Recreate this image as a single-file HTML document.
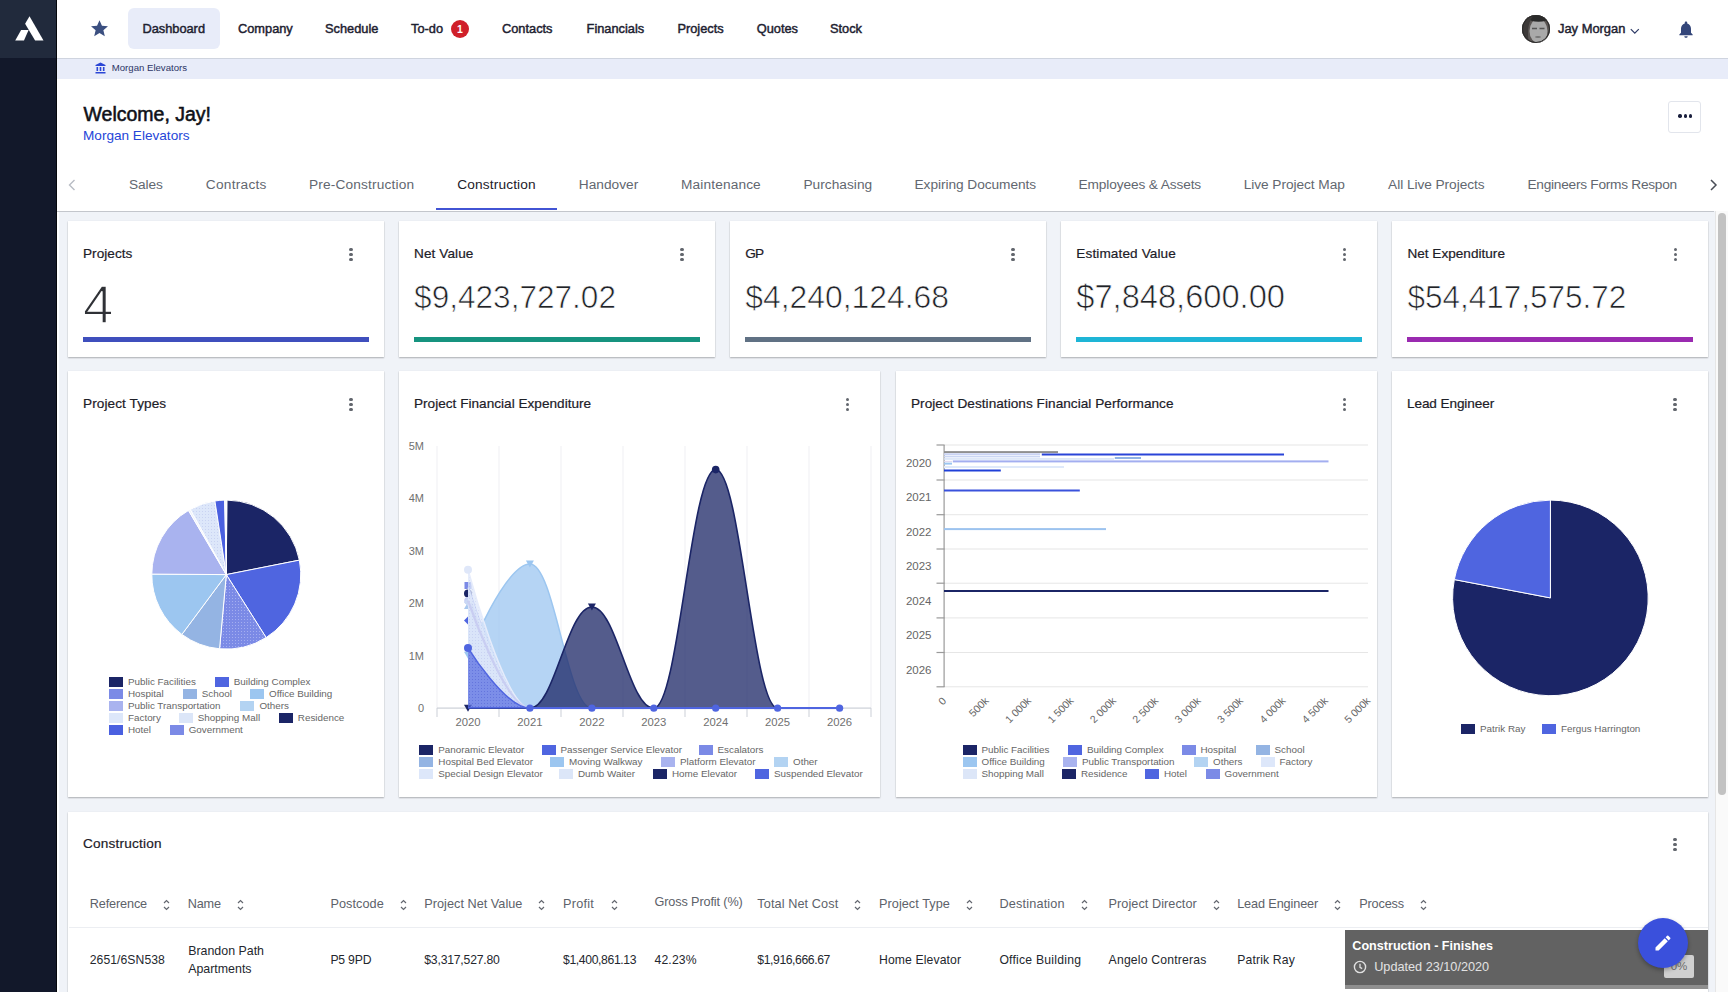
<!DOCTYPE html><html><head><meta charset="utf-8"><style>
*{box-sizing:border-box}
html,body{margin:0;padding:0}
body{width:1728px;height:992px;overflow:hidden;position:relative;background:#f0f3f8;font-family:"Liberation Sans", sans-serif;color:#1c1f2a}
.abs{position:absolute;white-space:nowrap}
.nav{position:absolute;top:21px;font-size:12.8px;font-weight:400;color:#1d2130;line-height:16px;-webkit-text-stroke:0.45px #1d2130}
.tab{position:absolute;top:176px;font-size:13.7px;color:#626770;line-height:18px}
.card{position:absolute;background:#fff;box-shadow:0 1px 1.5px rgba(0,0,0,.28),0 0 1px rgba(0,0,0,.08)}
.ctitle{position:absolute;font-size:13.6px;color:#1d2028;line-height:16px;-webkit-text-stroke:0.2px #1d2028}
.big{position:absolute;font-size:31.8px;color:#202227;line-height:36px;-webkit-text-stroke:0.7px #fff}
.bar{position:absolute;height:5px}
.keb{position:absolute;width:4px;height:14px}
.keb i{position:absolute;left:0.3px;width:3.4px;height:3.4px;border-radius:50%;background:#62666d}
.th{position:absolute;top:897px;font-size:12.7px;color:#5d626a;line-height:15px}
.td{position:absolute;font-size:12.2px;color:#24272e;line-height:15px}
.leg{position:absolute;font-size:9.85px;color:#666;line-height:12px;white-space:nowrap}
.lb{position:absolute;width:14px;height:10px}
</style></head><body>

<div class="abs" style="left:0;top:0;width:56px;height:992px;background:#12182a"></div>
<div class="abs" style="left:0;top:0;width:56px;height:57.5px;background:#212a3c"></div>
<div class="abs" style="left:57px;top:211px;width:2px;height:781px;background:#fff"></div>
<div class="abs" style="left:56px;top:0;width:1px;height:992px;background:#05070c"></div>
<svg class="abs" style="left:0;top:0" width="56" height="57" viewBox="0 0 56 57"><path d="M29.5 16.3 L43.5 40.6 L35.1 40.6 L25.1 23.8 Z" fill="#fff"/><path d="M21.1 29.9 L28.6 29.9 L24 40.6 L15.2 40.6 Z" fill="#fff"/></svg>
<div class="abs" style="left:57px;top:0;width:1671px;height:59px;background:#fff;border-bottom:1px solid #cfd4df"></div>
<svg class="abs" style="left:90px;top:19px" width="19" height="19" viewBox="0 0 24 24"><path d="M12 1.5l3.1 7.1 7.6.6-5.8 5 1.8 7.5L12 17.7l-6.7 4 1.8-7.5-5.8-5 7.6-.6z" fill="#3b4f80"/></svg>
<div class="abs" style="left:128px;top:8px;width:92px;height:41px;background:#e8ecf9;border-radius:6px"></div>
<div class="nav" style="left:142.4px">Dashboard</div>
<div class="nav" style="left:238px">Company</div>
<div class="nav" style="left:325px">Schedule</div>
<div class="nav" style="left:411px">To-do</div>
<div class="nav" style="left:502px">Contacts</div>
<div class="nav" style="left:586.6px">Financials</div>
<div class="nav" style="left:677.4px">Projects</div>
<div class="nav" style="left:756.7px">Quotes</div>
<div class="nav" style="left:830px">Stock</div>
<div class="abs" style="left:451px;top:20px;width:18px;height:18px;border-radius:9px;background:#d0202a;color:#fff;font-size:10.5px;font-weight:700;text-align:center;line-height:18px">1</div>
<svg class="abs" style="left:1522px;top:14.5px" width="28" height="28" viewBox="0 0 28 28"><defs><clipPath id="avc"><circle cx="14" cy="14" r="14"/></clipPath></defs><g clip-path="url(#avc)"><rect width="28" height="28" fill="#4a4848"/><path d="M0 0 H28 V28 H0Z" fill="#5a5553"/><ellipse cx="16.5" cy="16" rx="9" ry="12" fill="#a9a9a9"/><ellipse cx="16.5" cy="3.5" rx="10" ry="3.2" fill="#2a2a2a"/><path d="M10 13.5 h5 M17.5 13.5 h5" stroke="#555" stroke-width="1.4"/><ellipse cx="16" cy="22" rx="3" ry="1" fill="#777"/><path d="M0 0 V28 H7 C5 20 6 10 9 4 L12 0Z" fill="#3c3938"/></g><circle cx="14" cy="14" r="13.5" fill="none" stroke="#2a2a2a" stroke-width="1"/></svg>
<div class="nav" style="left:1558px;font-size:12.9px">Jay Morgan</div>
<svg class="abs" style="left:1630px;top:28px" width="10" height="7" viewBox="0 0 10 7"><path d="M0.8 1.2 L4.8 5.2 L8.8 1.2" stroke="#2d3a66" stroke-width="1.2" fill="none"/></svg>
<svg class="abs" style="left:1675.5px;top:18.5px" width="20" height="21" viewBox="0 0 24 24"><path d="M12 22c1.1 0 2-.9 2-2h-4c0 1.1.9 2 2 2zm6-6v-5c0-3.07-1.64-5.64-4.5-6.32V4c0-.83-.67-1.5-1.5-1.5s-1.5.67-1.5 1.5v.68C7.63 5.36 6 7.92 6 11v5l-2 2v1h16v-1l-2-2z" fill="#34467a"/></svg>
<div class="abs" style="left:57px;top:59px;width:1671px;height:20px;background:#e8ecf9"></div>
<svg class="abs" style="left:95px;top:62px" width="11" height="12" viewBox="0 0 11 12"><path d="M5.5 0.5 L10.5 3 L10.5 4 L0.5 4 L0.5 3 Z" fill="#2b46d6"/><rect x="1.5" y="5" width="1.6" height="4" fill="#2b46d6"/><rect x="4.7" y="5" width="1.6" height="4" fill="#2b46d6"/><rect x="7.9" y="5" width="1.6" height="4" fill="#2b46d6"/><rect x="0.5" y="10" width="10" height="1.5" fill="#2b46d6"/></svg>
<div class="abs" style="left:111.8px;top:62px;font-size:9.6px;color:#2c3566;line-height:12px">Morgan Elevators</div>
<div class="abs" style="left:57px;top:79px;width:1671px;height:132px;background:#fff"></div>
<div class="abs" style="left:83.5px;top:103px;font-size:19.5px;font-weight:400;color:#0f1117;line-height:22px;-webkit-text-stroke:0.55px #0f1117">Welcome, Jay!</div>
<div class="abs" style="left:83px;top:128px;font-size:13.6px;color:#2546d8;line-height:16px">Morgan Elevators</div>
<div class="abs" style="left:1668px;top:101px;width:33px;height:32px;border:1px solid #e2e5ec;border-radius:3px;background:#fff"></div>
<div class="abs" style="left:1678.2px;top:114.3px;width:3.4px;height:3.4px;border-radius:50%;background:#1a1f3d"></div>
<div class="abs" style="left:1683.6px;top:114.3px;width:3.4px;height:3.4px;border-radius:50%;background:#1a1f3d"></div>
<div class="abs" style="left:1689.0px;top:114.3px;width:3.4px;height:3.4px;border-radius:50%;background:#1a1f3d"></div>
<svg class="abs" style="left:68px;top:179px" width="8" height="12" viewBox="0 0 8 12"><path d="M6.5 1 L1.5 6 L6.5 11" stroke="#b8bcc4" stroke-width="1.4" fill="none"/></svg>
<svg class="abs" style="left:1709px;top:179px" width="9" height="12" viewBox="0 0 8 12"><path d="M1.5 1 L6.5 6 L1.5 11" stroke="#4a4e57" stroke-width="1.5" fill="none"/></svg>
<div class="tab" style="left:129.1px;color:#626770;letter-spacing:-0.117px">Sales</div>
<div class="tab" style="left:205.8px;color:#626770;letter-spacing:0.26px">Contracts</div>
<div class="tab" style="left:309.1px;color:#626770;letter-spacing:0.148px">Pre-Construction</div>
<div class="tab" style="left:457.3px;color:#1d2028;letter-spacing:0.136px">Construction</div>
<div class="tab" style="left:578.8px;color:#626770;letter-spacing:0.015px">Handover</div>
<div class="tab" style="left:681.0px;color:#626770;letter-spacing:0.136px">Maintenance</div>
<div class="tab" style="left:803.4px;color:#626770;letter-spacing:0.029px">Purchasing</div>
<div class="tab" style="left:914.5px;color:#626770;letter-spacing:-0.046px">Expiring Documents</div>
<div class="tab" style="left:1078.5px;color:#626770;letter-spacing:-0.122px">Employees &amp; Assets</div>
<div class="tab" style="left:1243.7px;color:#626770;letter-spacing:-0.055px">Live Project Map</div>
<div class="tab" style="left:1388.1px;color:#626770;letter-spacing:-0.054px">All Live Projects</div>
<div class="tab" style="left:1527.5px;color:#626770;letter-spacing:-0.263px">Engineers Forms Respon</div>
<div class="abs" style="left:57px;top:210.5px;width:1657px;height:1.3px;background:#c3c6cc"></div>
<div class="abs" style="left:436px;top:208px;width:121px;height:2px;background:#4254d4"></div>
<div class="abs" style="left:1715px;top:211px;width:13px;height:781px;background:#fafafa;border-left:1px solid #e6e6e6"></div>
<div class="abs" style="left:1718px;top:213px;width:8px;height:582px;border-radius:4px;background:#c2c2c2"></div>
<div class="card" style="left:68.0px;top:221px;width:315.5px;height:135.5px"></div>
<div class="ctitle" style="left:83.0px;top:246px;letter-spacing:0.039px">Projects</div>
<div class="keb" style="left:349.0px;top:247px"><i style="top:0.5px"></i><i style="top:5.8px"></i><i style="top:11.1px"></i></div>
<div class="abs" style="left:83.0px;top:279.5px;font-size:54.5px;font-weight:400;color:#2f3136;line-height:50px;-webkit-text-stroke:1.4px #fff">4</div>
<div class="bar" style="left:83.0px;top:337px;width:286px;background:#3f4fbd"></div>
<div class="card" style="left:399.1px;top:221px;width:315.5px;height:135.5px"></div>
<div class="ctitle" style="left:414.1px;top:246px;letter-spacing:0.073px">Net Value</div>
<div class="keb" style="left:680.1px;top:247px"><i style="top:0.5px"></i><i style="top:5.8px"></i><i style="top:11.1px"></i></div>
<div class="big" style="left:414.1px;top:279px;font-size:31.57px">$9,423,727.02</div>
<div class="bar" style="left:414.1px;top:337px;width:286px;background:#16937f"></div>
<div class="card" style="left:730.2px;top:221px;width:315.5px;height:135.5px"></div>
<div class="ctitle" style="left:745.2px;top:246px;letter-spacing:-0.85px">GP</div>
<div class="keb" style="left:1011.2px;top:247px"><i style="top:0.5px"></i><i style="top:5.8px"></i><i style="top:11.1px"></i></div>
<div class="big" style="left:745.2px;top:279px;font-size:31.89px">$4,240,124.68</div>
<div class="bar" style="left:745.2px;top:337px;width:286px;background:#607184"></div>
<div class="card" style="left:1061.3px;top:221px;width:315.5px;height:135.5px"></div>
<div class="ctitle" style="left:1076.3px;top:246px;letter-spacing:0.113px">Estimated Value</div>
<div class="keb" style="left:1342.3000000000002px;top:247px"><i style="top:0.5px"></i><i style="top:5.8px"></i><i style="top:11.1px"></i></div>
<div class="big" style="left:1076.3px;top:279px;font-size:32.64px">$7,848,600.00</div>
<div class="bar" style="left:1076.3px;top:337px;width:286px;background:#1eb5d6"></div>
<div class="card" style="left:1392.4px;top:221px;width:315.5px;height:135.5px"></div>
<div class="ctitle" style="left:1407.4px;top:246px;letter-spacing:0.006px">Net Expenditure</div>
<div class="keb" style="left:1673.4px;top:247px"><i style="top:0.5px"></i><i style="top:5.8px"></i><i style="top:11.1px"></i></div>
<div class="big" style="left:1407.4px;top:279px;font-size:31.49px">$54,417,575.72</div>
<div class="bar" style="left:1407.4px;top:337px;width:286px;background:#9a2ab0"></div>
<div class="card" style="left:68px;top:371px;width:315.5px;height:425.5px"></div>
<div class="ctitle" style="left:83px;top:396px;letter-spacing:0.088px">Project Types</div>
<div class="keb" style="left:349.0px;top:397px"><i style="top:0.5px"></i><i style="top:5.8px"></i><i style="top:11.1px"></i></div>
<div class="card" style="left:399px;top:371px;width:481px;height:425.5px"></div>
<div class="ctitle" style="left:414px;top:396px;letter-spacing:0.011px">Project Financial Expenditure</div>
<div class="keb" style="left:845.5px;top:397px"><i style="top:0.5px"></i><i style="top:5.8px"></i><i style="top:11.1px"></i></div>
<div class="card" style="left:896px;top:371px;width:481px;height:425.5px"></div>
<div class="ctitle" style="left:911px;top:396px;letter-spacing:0.045px">Project Destinations Financial Performance</div>
<div class="keb" style="left:1342.5px;top:397px"><i style="top:0.5px"></i><i style="top:5.8px"></i><i style="top:11.1px"></i></div>
<div class="card" style="left:1392px;top:371px;width:315.5px;height:425.5px"></div>
<div class="ctitle" style="left:1407px;top:396px;letter-spacing:-0.105px">Lead Engineer</div>
<div class="keb" style="left:1673.0px;top:397px"><i style="top:0.5px"></i><i style="top:5.8px"></i><i style="top:11.1px"></i></div>
<div class="card" style="left:68px;top:811.5px;width:1639.5px;height:190px"></div>
<div class="ctitle" style="left:83px;top:836px;letter-spacing:0.196px">Construction</div>
<div class="keb" style="left:1673px;top:837px"><i style="top:0.5px"></i><i style="top:5.8px"></i><i style="top:11.1px"></i></div>
<div class="th" style="left:89.8px;top:897px;letter-spacing:-0.149px">Reference</div>
<svg class="abs" style="left:163.4px;top:898.5px" width="7" height="12" viewBox="0 0 7 12"><path d="M1 4 L3.5 1.5 L6 4 M1 8 L3.5 10.5 L6 8" stroke="#63676f" stroke-width="1.2" fill="none"/></svg>
<div class="th" style="left:187.7px;top:897px;letter-spacing:-0.192px">Name</div>
<svg class="abs" style="left:237.4px;top:898.5px" width="7" height="12" viewBox="0 0 7 12"><path d="M1 4 L3.5 1.5 L6 4 M1 8 L3.5 10.5 L6 8" stroke="#63676f" stroke-width="1.2" fill="none"/></svg>
<div class="th" style="left:330.4px;top:897px;letter-spacing:0.064px">Postcode</div>
<svg class="abs" style="left:400px;top:898.5px" width="7" height="12" viewBox="0 0 7 12"><path d="M1 4 L3.5 1.5 L6 4 M1 8 L3.5 10.5 L6 8" stroke="#63676f" stroke-width="1.2" fill="none"/></svg>
<div class="th" style="left:424.3px;top:897px;letter-spacing:0.02px">Project Net Value</div>
<svg class="abs" style="left:538.4px;top:898.5px" width="7" height="12" viewBox="0 0 7 12"><path d="M1 4 L3.5 1.5 L6 4 M1 8 L3.5 10.5 L6 8" stroke="#63676f" stroke-width="1.2" fill="none"/></svg>
<div class="th" style="left:563.0px;top:897px;letter-spacing:0.232px">Profit</div>
<svg class="abs" style="left:610.8px;top:898.5px" width="7" height="12" viewBox="0 0 7 12"><path d="M1 4 L3.5 1.5 L6 4 M1 8 L3.5 10.5 L6 8" stroke="#63676f" stroke-width="1.2" fill="none"/></svg>
<div class="th" style="left:654.5px;top:895px;letter-spacing:-0.128px">Gross Profit (%)</div>
<div class="th" style="left:757.3px;top:897px;letter-spacing:0.096px">Total Net Cost</div>
<svg class="abs" style="left:854px;top:898.5px" width="7" height="12" viewBox="0 0 7 12"><path d="M1 4 L3.5 1.5 L6 4 M1 8 L3.5 10.5 L6 8" stroke="#63676f" stroke-width="1.2" fill="none"/></svg>
<div class="th" style="left:879.0px;top:897px;letter-spacing:0.05px">Project Type</div>
<svg class="abs" style="left:965.5px;top:898.5px" width="7" height="12" viewBox="0 0 7 12"><path d="M1 4 L3.5 1.5 L6 4 M1 8 L3.5 10.5 L6 8" stroke="#63676f" stroke-width="1.2" fill="none"/></svg>
<div class="th" style="left:999.4px;top:897px;letter-spacing:0.177px">Destination</div>
<svg class="abs" style="left:1080.7px;top:898.5px" width="7" height="12" viewBox="0 0 7 12"><path d="M1 4 L3.5 1.5 L6 4 M1 8 L3.5 10.5 L6 8" stroke="#63676f" stroke-width="1.2" fill="none"/></svg>
<div class="th" style="left:1108.6px;top:897px;letter-spacing:0.046px">Project Director</div>
<svg class="abs" style="left:1212.9px;top:898.5px" width="7" height="12" viewBox="0 0 7 12"><path d="M1 4 L3.5 1.5 L6 4 M1 8 L3.5 10.5 L6 8" stroke="#63676f" stroke-width="1.2" fill="none"/></svg>
<div class="th" style="left:1237.2px;top:897px;letter-spacing:-0.126px">Lead Engineer</div>
<svg class="abs" style="left:1334.3px;top:898.5px" width="7" height="12" viewBox="0 0 7 12"><path d="M1 4 L3.5 1.5 L6 4 M1 8 L3.5 10.5 L6 8" stroke="#63676f" stroke-width="1.2" fill="none"/></svg>
<div class="th" style="left:1359.2px;top:897px;letter-spacing:-0.146px">Process</div>
<svg class="abs" style="left:1420.2px;top:898.5px" width="7" height="12" viewBox="0 0 7 12"><path d="M1 4 L3.5 1.5 L6 4 M1 8 L3.5 10.5 L6 8" stroke="#63676f" stroke-width="1.2" fill="none"/></svg>
<div class="abs" style="left:69px;top:927px;width:1639px;height:1px;background:#eceef2"></div>
<div class="td" style="left:89.8px;top:953px;letter-spacing:0.049px">2651/6SN538</div>
<div class="td" style="left:330.4px;top:953px;letter-spacing:-0.189px">P5 9PD</div>
<div class="td" style="left:424.3px;top:953px;letter-spacing:-0.201px">$3,317,527.80</div>
<div class="td" style="left:563.0px;top:953px;letter-spacing:-0.368px">$1,400,861.13</div>
<div class="td" style="left:654.5px;top:953px;letter-spacing:0.145px">42.23%</div>
<div class="td" style="left:757.3px;top:953px;letter-spacing:-0.409px">$1,916,666.67</div>
<div class="td" style="left:879.0px;top:953px;letter-spacing:0.118px">Home Elevator</div>
<div class="td" style="left:999.4px;top:953px;letter-spacing:0.226px">Office Building</div>
<div class="td" style="left:1108.6px;top:953px;letter-spacing:0.198px">Angelo Contreras</div>
<div class="td" style="left:1237.2px;top:953px;letter-spacing:0.159px">Patrik Ray</div>
<div class="td" style="left:188.2px;top:944px;font-size:12.4px">Brandon Path</div>
<div class="td" style="left:188.2px;top:962px;font-size:12.4px">Apartments</div>
<div class="abs" style="left:1345px;top:930px;width:363px;height:59px;background:#8f8f8f"></div>
<div class="abs" style="left:1345px;top:930px;width:363px;height:55px;background:#626262"></div>
<div class="abs" style="left:1352.3px;top:938px;font-size:12.6px;font-weight:700;color:#fff;line-height:16px">Construction - Finishes</div>
<svg class="abs" style="left:1353px;top:960px" width="14" height="14" viewBox="0 0 14 14"><circle cx="7" cy="7" r="5.6" stroke="#e0e0e0" stroke-width="1.4" fill="none"/><path d="M7 3.8 V7.3 L9.2 8.6" stroke="#e0e0e0" stroke-width="1.3" fill="none"/></svg>
<div class="abs" style="left:1374.2px;top:959px;font-size:12.7px;color:#e2e2e2;line-height:16px">Updated 23/10/2020</div>
<div class="abs" style="left:1664px;top:955px;width:30px;height:23px;background:#d0d0d0;border-radius:2px;font-size:11.5px;color:#6e6e6e;line-height:23px;text-align:center">0%</div>
<div class="abs" style="left:1638px;top:918px;width:50px;height:50px;border-radius:50%;background:#3a50dc;box-shadow:0 2px 4px rgba(0,0,0,.3)"></div>
<svg class="abs" style="left:1653px;top:933px" width="20" height="20" viewBox="0 0 24 24"><path d="M3 17.25V21h3.75L17.81 9.94l-3.75-3.75L3 17.25zM20.71 7.04a1 1 0 0 0 0-1.41l-2.34-2.34a1 1 0 0 0-1.41 0l-1.83 1.83 3.75 3.75 1.83-1.83z" fill="#fff"/></svg>
<svg width="0" height="0" style="position:absolute"><defs>
<pattern id="dotM" width="3" height="3" patternUnits="userSpaceOnUse"><rect width="3" height="3" fill="#7b8ae6"/><rect x="1" y="1" width="1" height="1" fill="#a4aef0"/></pattern>
<pattern id="dotL" width="3" height="3" patternUnits="userSpaceOnUse"><rect width="3" height="3" fill="#dde7fa"/><rect x="1" y="1" width="1" height="1" fill="#c9d3f2"/></pattern>
<pattern id="dotN" width="3" height="3" patternUnits="userSpaceOnUse"><rect width="3" height="3" fill="#1b2566"/><rect x="1" y="1" width="1" height="1" fill="#2a3575"/></pattern>
<pattern id="dotS" width="3" height="3" patternUnits="userSpaceOnUse"><rect width="3" height="3" fill="#5d71e2"/><rect x="1" y="1" width="1" height="1" fill="#4256d6"/></pattern>
<pattern id="dotO" width="3" height="3" patternUnits="userSpaceOnUse"><rect width="3" height="3" fill="#b3d3f2"/><rect x="1" y="1" width="1" height="1" fill="#cfe3f7"/></pattern>
</defs></svg>
<svg class="abs" style="left:0;top:0;overflow:visible" width="1728" height="992"><path d="M226.30 574.60 L226.82 500.10 A74.5 74.5 0 0 1 299.38 560.13 Z" fill="#1b2566" stroke="#fff" stroke-width="1" stroke-linejoin="round"/><path d="M226.30 574.60 L299.38 560.13 A74.5 74.5 0 0 1 266.11 637.57 Z" fill="#4f65e0" stroke="#fff" stroke-width="1" stroke-linejoin="round"/><path d="M226.30 574.60 L266.11 637.57 A74.5 74.5 0 0 1 219.55 648.79 Z" fill="url(#dotM)" stroke="#fff" stroke-width="1" stroke-linejoin="round"/><path d="M226.30 574.60 L219.55 648.79 A74.5 74.5 0 0 1 181.88 634.41 Z" fill="#94b4e3" stroke="#fff" stroke-width="1" stroke-linejoin="round"/><path d="M226.30 574.60 L181.88 634.41 A74.5 74.5 0 0 1 151.80 574.08 Z" fill="#9cc6f0" stroke="#fff" stroke-width="1" stroke-linejoin="round"/><path d="M226.30 574.60 L151.80 574.08 A74.5 74.5 0 0 1 188.49 510.41 Z" fill="#a9b3ef" stroke="#fff" stroke-width="1" stroke-linejoin="round"/><path d="M226.30 574.60 L188.49 510.41 A74.5 74.5 0 0 1 190.30 509.38 Z" fill="#eef3fc" stroke="#fff" stroke-width="1" stroke-linejoin="round"/><path d="M226.30 574.60 L190.30 509.38 A74.5 74.5 0 0 1 214.90 500.98 Z" fill="url(#dotL)" stroke="#fff" stroke-width="1" stroke-linejoin="round"/><path d="M226.30 574.60 L214.90 500.98 A74.5 74.5 0 0 1 224.74 500.12 Z" fill="#4a60e0" stroke="#fff" stroke-width="1" stroke-linejoin="round"/><path d="M226.30 574.60 L224.74 500.12 A74.5 74.5 0 0 1 226.82 500.10 Z" fill="#f4f6fd" stroke="#fff" stroke-width="1" stroke-linejoin="round"/><path d="M1550.40 597.90 L1550.40 500.10 A97.8 97.8 0 1 1 1454.33 579.57 Z" fill="#1b2566" stroke="#fff" stroke-width="1" stroke-linejoin="round"/><path d="M1550.40 597.90 L1454.33 579.57 A97.8 97.8 0 0 1 1550.40 500.10 Z" fill="#4f65e0" stroke="#fff" stroke-width="1" stroke-linejoin="round"/></svg>
<div class="lb" style="left:109px;top:676.5px;background:#1b2566"></div>
<div class="leg" style="left:128px;top:675.5px">Public Facilities</div>
<div class="lb" style="left:214.8px;top:676.5px;background:#4f65e0"></div>
<div class="leg" style="left:233.8px;top:675.5px">Building Complex</div>
<div class="lb" style="left:109px;top:688.5px;background:#7b8ae6"></div>
<div class="leg" style="left:128px;top:687.5px">Hospital</div>
<div class="lb" style="left:182.8px;top:688.5px;background:#94b4e3"></div>
<div class="leg" style="left:201.8px;top:687.5px">School</div>
<div class="lb" style="left:250px;top:688.5px;background:#9cc6f0"></div>
<div class="leg" style="left:269px;top:687.5px">Office Building</div>
<div class="lb" style="left:109px;top:700.5px;background:#a9b3ef"></div>
<div class="leg" style="left:128px;top:699.5px">Public Transportation</div>
<div class="lb" style="left:240.4px;top:700.5px;background:#b3d3f2"></div>
<div class="leg" style="left:259.4px;top:699.5px">Others</div>
<div class="lb" style="left:109px;top:712.5px;background:#dde7fa"></div>
<div class="leg" style="left:128px;top:711.5px">Factory</div>
<div class="lb" style="left:178.7px;top:712.5px;background:#dce6f8"></div>
<div class="leg" style="left:197.7px;top:711.5px">Shopping Mall</div>
<div class="lb" style="left:278.8px;top:712.5px;background:#1b2566"></div>
<div class="leg" style="left:297.8px;top:711.5px">Residence</div>
<div class="lb" style="left:109px;top:724.5px;background:#4a60e0"></div>
<div class="leg" style="left:128px;top:723.5px">Hotel</div>
<div class="lb" style="left:169.7px;top:724.5px;background:#7b8ae6"></div>
<div class="leg" style="left:188.7px;top:723.5px">Government</div>
<div class="lb" style="left:1461px;top:724px;background:#1b2566"></div>
<div class="leg" style="left:1480px;top:723px">Patrik Ray</div>
<div class="lb" style="left:1542px;top:724px;background:#4f65e0"></div>
<div class="leg" style="left:1561px;top:723px">Fergus Harrington</div>
<svg class="abs" style="left:0;top:0;overflow:visible" width="1728" height="992"><rect x="436.5" y="446" width="1" height="262" fill="#f0f0f3"/><rect x="436.5" y="708" width="1" height="9" fill="#ccd0d8"/><rect x="498.5" y="446" width="1" height="262" fill="#f0f0f3"/><rect x="498.5" y="708" width="1" height="9" fill="#ccd0d8"/><rect x="560.5" y="446" width="1" height="262" fill="#f0f0f3"/><rect x="560.5" y="708" width="1" height="9" fill="#ccd0d8"/><rect x="622.5" y="446" width="1" height="262" fill="#f0f0f3"/><rect x="622.5" y="708" width="1" height="9" fill="#ccd0d8"/><rect x="684.5" y="446" width="1" height="262" fill="#f0f0f3"/><rect x="684.5" y="708" width="1" height="9" fill="#ccd0d8"/><rect x="746.5" y="446" width="1" height="262" fill="#f0f0f3"/><rect x="746.5" y="708" width="1" height="9" fill="#ccd0d8"/><rect x="808.5" y="446" width="1" height="262" fill="#f0f0f3"/><rect x="808.5" y="708" width="1" height="9" fill="#ccd0d8"/><rect x="870.5" y="446" width="1" height="262" fill="#f0f0f3"/><rect x="870.5" y="708" width="1" height="9" fill="#ccd0d8"/><rect x="437" y="707.5" width="434" height="1.2" fill="#ccd0d8"/><text x="424" y="712.2" text-anchor="end" font-family="Liberation Sans" font-size="11" fill="#707070">0</text><text x="424" y="659.8" text-anchor="end" font-family="Liberation Sans" font-size="11" fill="#707070">1M</text><text x="424" y="607.3" text-anchor="end" font-family="Liberation Sans" font-size="11" fill="#707070">2M</text><text x="424" y="554.9" text-anchor="end" font-family="Liberation Sans" font-size="11" fill="#707070">3M</text><text x="424" y="502.4" text-anchor="end" font-family="Liberation Sans" font-size="11" fill="#707070">4M</text><text x="424" y="450.0" text-anchor="end" font-family="Liberation Sans" font-size="11" fill="#707070">5M</text><text x="468.0" y="726" text-anchor="middle" font-family="Liberation Sans" font-size="11.3" fill="#707070">2020</text><text x="529.9" y="726" text-anchor="middle" font-family="Liberation Sans" font-size="11.3" fill="#707070">2021</text><text x="591.9" y="726" text-anchor="middle" font-family="Liberation Sans" font-size="11.3" fill="#707070">2022</text><text x="653.8" y="726" text-anchor="middle" font-family="Liberation Sans" font-size="11.3" fill="#707070">2023</text><text x="715.7" y="726" text-anchor="middle" font-family="Liberation Sans" font-size="11.3" fill="#707070">2024</text><text x="777.6" y="726" text-anchor="middle" font-family="Liberation Sans" font-size="11.3" fill="#707070">2025</text><text x="839.6" y="726" text-anchor="middle" font-family="Liberation Sans" font-size="11.3" fill="#707070">2026</text><path d="M468.00 593.36 C468.00 593.36 505.16 708.20 529.93 708.20 C554.70 708.20 567.09 708.20 591.86 708.20 C616.63 708.20 629.02 708.20 653.79 708.20 C678.56 708.20 690.95 708.20 715.72 708.20 C740.49 708.20 752.88 708.20 777.65 708.20 C802.42 708.20 839.58 708.20 839.58 708.20 L839.58 708.2 L468.00 708.2 Z" fill="#1b2566" fill-opacity="0.75"/><path d="M468.00 593.36 C468.00 593.36 505.16 708.20 529.93 708.20 C554.70 708.20 567.09 708.20 591.86 708.20 C616.63 708.20 629.02 708.20 653.79 708.20 C678.56 708.20 690.95 708.20 715.72 708.20 C740.49 708.20 752.88 708.20 777.65 708.20 C802.42 708.20 839.58 708.20 839.58 708.20" fill="none" stroke="#1b2566" stroke-width="1.2"/><circle cx="468.0" cy="593.4" r="4" fill="#1b2566"/><path d="M468.00 620.63 C468.00 620.63 505.16 708.20 529.93 708.20 C554.70 708.20 567.09 708.20 591.86 708.20 C616.63 708.20 629.02 708.20 653.79 708.20 C678.56 708.20 690.95 708.20 715.72 708.20 C740.49 708.20 752.88 708.20 777.65 708.20 C802.42 708.20 839.58 708.20 839.58 708.20 L839.58 708.2 L468.00 708.2 Z" fill="#4f65e0" fill-opacity="0.75"/><path d="M468.00 620.63 C468.00 620.63 505.16 708.20 529.93 708.20 C554.70 708.20 567.09 708.20 591.86 708.20 C616.63 708.20 629.02 708.20 653.79 708.20 C678.56 708.20 690.95 708.20 715.72 708.20 C740.49 708.20 752.88 708.20 777.65 708.20 C802.42 708.20 839.58 708.20 839.58 708.20" fill="none" stroke="#4f65e0" stroke-width="1.2"/><path d="M468.0 616.6 l4 4 l-4 4 l-4 -4z" fill="#4f65e0"/><path d="M468.00 585.49 C468.00 585.49 505.16 708.20 529.93 708.20 C554.70 708.20 567.09 708.20 591.86 708.20 C616.63 708.20 629.02 708.20 653.79 708.20 C678.56 708.20 690.95 708.20 715.72 708.20 C740.49 708.20 752.88 708.20 777.65 708.20 C802.42 708.20 839.58 708.20 839.58 708.20 L839.58 708.2 L468.00 708.2 Z" fill="url(#dotM)" fill-opacity="0.75"/><path d="M468.00 585.49 C468.00 585.49 505.16 708.20 529.93 708.20 C554.70 708.20 567.09 708.20 591.86 708.20 C616.63 708.20 629.02 708.20 653.79 708.20 C678.56 708.20 690.95 708.20 715.72 708.20 C740.49 708.20 752.88 708.20 777.65 708.20 C802.42 708.20 839.58 708.20 839.58 708.20" fill="none" stroke="#7b8ae6" stroke-width="1.2"/><rect x="464.5" y="582.0" width="7.0" height="7.0" fill="#7b8ae6"/><path d="M468.00 605.42 C468.00 605.42 505.16 708.20 529.93 708.20 C554.70 708.20 567.09 708.20 591.86 708.20 C616.63 708.20 629.02 708.20 653.79 708.20 C678.56 708.20 690.95 708.20 715.72 708.20 C740.49 708.20 752.88 708.20 777.65 708.20 C802.42 708.20 839.58 708.20 839.58 708.20 L839.58 708.2 L468.00 708.2 Z" fill="#94b4e3" fill-opacity="0.75"/><path d="M468.00 605.42 C468.00 605.42 505.16 708.20 529.93 708.20 C554.70 708.20 567.09 708.20 591.86 708.20 C616.63 708.20 629.02 708.20 653.79 708.20 C678.56 708.20 690.95 708.20 715.72 708.20 C740.49 708.20 752.88 708.20 777.65 708.20 C802.42 708.20 839.58 708.20 839.58 708.20" fill="none" stroke="#94b4e3" stroke-width="1.2"/><path d="M468.0 601.9 l4 7 h-8z" fill="#a9c8ef"/><path d="M468.00 655.24 C468.00 655.24 505.16 563.99 529.93 563.99 C554.70 563.99 567.09 708.20 591.86 708.20 C616.63 708.20 629.02 708.20 653.79 708.20 C678.56 708.20 690.95 708.20 715.72 708.20 C740.49 708.20 752.88 708.20 777.65 708.20 C802.42 708.20 839.58 708.20 839.58 708.20 L839.58 708.2 L468.00 708.2 Z" fill="#9cc6f0" fill-opacity="0.75"/><path d="M468.00 655.24 C468.00 655.24 505.16 563.99 529.93 563.99 C554.70 563.99 567.09 708.20 591.86 708.20 C616.63 708.20 629.02 708.20 653.79 708.20 C678.56 708.20 690.95 708.20 715.72 708.20 C740.49 708.20 752.88 708.20 777.65 708.20 C802.42 708.20 839.58 708.20 839.58 708.20" fill="none" stroke="#9cc6f0" stroke-width="1.5"/><path d="M464.0 651.7 h8 l-4 7z" fill="#9cc6f0"/><path d="M525.9 560.5 h8 l-4 7z" fill="#9cc6f0"/><path d="M468.00 600.70 C468.00 600.70 505.16 708.20 529.93 708.20 C554.70 708.20 567.09 708.20 591.86 708.20 C616.63 708.20 629.02 708.20 653.79 708.20 C678.56 708.20 690.95 708.20 715.72 708.20 C740.49 708.20 752.88 708.20 777.65 708.20 C802.42 708.20 839.58 708.20 839.58 708.20 L839.58 708.2 L468.00 708.2 Z" fill="#a9b3ef" fill-opacity="0.75"/><path d="M468.00 600.70 C468.00 600.70 505.16 708.20 529.93 708.20 C554.70 708.20 567.09 708.20 591.86 708.20 C616.63 708.20 629.02 708.20 653.79 708.20 C678.56 708.20 690.95 708.20 715.72 708.20 C740.49 708.20 752.88 708.20 777.65 708.20 C802.42 708.20 839.58 708.20 839.58 708.20" fill="none" stroke="#a9b3ef" stroke-width="1.5"/><circle cx="468.0" cy="600.7" r="3.8" fill="#c8cff5"/><path d="M468.00 602.27 C468.00 602.27 505.16 708.20 529.93 708.20 C554.70 708.20 567.09 708.20 591.86 708.20 C616.63 708.20 629.02 708.20 653.79 708.20 C678.56 708.20 690.95 708.20 715.72 708.20 C740.49 708.20 752.88 708.20 777.65 708.20 C802.42 708.20 839.58 708.20 839.58 708.20 L839.58 708.2 L468.00 708.2 Z" fill="url(#dotO)" fill-opacity="0.75"/><path d="M468.00 602.27 C468.00 602.27 505.16 708.20 529.93 708.20 C554.70 708.20 567.09 708.20 591.86 708.20 C616.63 708.20 629.02 708.20 653.79 708.20 C678.56 708.20 690.95 708.20 715.72 708.20 C740.49 708.20 752.88 708.20 777.65 708.20 C802.42 708.20 839.58 708.20 839.58 708.20" fill="none" stroke="#b3d3f2" stroke-width="1.2"/><path d="M468.0 598.3 l4 4 l-4 4 l-4 -4z" fill="#c9d8f4"/><path d="M468.00 587.59 C468.00 587.59 505.16 708.20 529.93 708.20 C554.70 708.20 567.09 708.20 591.86 708.20 C616.63 708.20 629.02 708.20 653.79 708.20 C678.56 708.20 690.95 708.20 715.72 708.20 C740.49 708.20 752.88 708.20 777.65 708.20 C802.42 708.20 839.58 708.20 839.58 708.20 L839.58 708.2 L468.00 708.2 Z" fill="url(#dotL)" fill-opacity="0.75"/><path d="M468.00 587.59 C468.00 587.59 505.16 708.20 529.93 708.20 C554.70 708.20 567.09 708.20 591.86 708.20 C616.63 708.20 629.02 708.20 653.79 708.20 C678.56 708.20 690.95 708.20 715.72 708.20 C740.49 708.20 752.88 708.20 777.65 708.20 C802.42 708.20 839.58 708.20 839.58 708.20" fill="none" stroke="#dfe7fa" stroke-width="1.2"/><path d="M468.00 569.76 C468.00 569.76 505.16 708.20 529.93 708.20 C554.70 708.20 567.09 708.20 591.86 708.20 C616.63 708.20 629.02 708.20 653.79 708.20 C678.56 708.20 690.95 708.20 715.72 708.20 C740.49 708.20 752.88 708.20 777.65 708.20 C802.42 708.20 839.58 708.20 839.58 708.20 L839.58 708.2 L468.00 708.2 Z" fill="url(#dotL)" fill-opacity="0.75"/><path d="M468.00 569.76 C468.00 569.76 505.16 708.20 529.93 708.20 C554.70 708.20 567.09 708.20 591.86 708.20 C616.63 708.20 629.02 708.20 653.79 708.20 C678.56 708.20 690.95 708.20 715.72 708.20 C740.49 708.20 752.88 708.20 777.65 708.20 C802.42 708.20 839.58 708.20 839.58 708.20" fill="none" stroke="#e6ecfb" stroke-width="1.5"/><circle cx="468.0" cy="569.8" r="4" fill="#dfe7f9"/><path d="M468.00 600.70 C468.00 600.70 505.16 708.20 529.93 708.20 C554.70 708.20 567.09 708.20 591.86 708.20 C616.63 708.20 629.02 708.20 653.79 708.20 C678.56 708.20 690.95 708.20 715.72 708.20 C740.49 708.20 752.88 708.20 777.65 708.20 C802.42 708.20 839.58 708.20 839.58 708.20" fill="none" stroke="#c6cbf1" stroke-width="2.2" opacity="0.9"/><path d="M468.00 708.20 C468.00 708.20 505.16 708.20 529.93 708.20 C554.70 708.20 567.09 606.99 591.86 606.99 C616.63 606.99 629.02 708.20 653.79 708.20 C678.56 708.20 690.95 469.60 715.72 469.60 C740.49 469.60 752.88 708.20 777.65 708.20 C802.42 708.20 839.58 708.20 839.58 708.20 L839.58 708.2 L468.00 708.2 Z" fill="#1b2566" fill-opacity="0.75"/><path d="M468.00 708.20 C468.00 708.20 505.16 708.20 529.93 708.20 C554.70 708.20 567.09 606.99 591.86 606.99 C616.63 606.99 629.02 708.20 653.79 708.20 C678.56 708.20 690.95 469.60 715.72 469.60 C740.49 469.60 752.88 708.20 777.65 708.20 C802.42 708.20 839.58 708.20 839.58 708.20" fill="none" stroke="#1b2566" stroke-width="1.6"/><path d="M464.0 704.7 h8 l-4 7z" fill="#1b2566"/><path d="M587.9 603.5 h8 l-4 7z" fill="#1b2566"/><circle cx="715.7" cy="469.6" r="3.8" fill="#1b2566"/><path d="M468.00 647.89 C468.00 647.89 505.16 708.20 529.93 708.20 C554.70 708.20 567.09 708.20 591.86 708.20 C616.63 708.20 629.02 708.20 653.79 708.20 C678.56 708.20 690.95 708.20 715.72 708.20 C740.49 708.20 752.88 708.20 777.65 708.20 C802.42 708.20 839.58 708.20 839.58 708.20 L839.58 708.2 L468.00 708.2 Z" fill="url(#dotS)" fill-opacity="0.75"/><path d="M468.00 647.89 C468.00 647.89 505.16 708.20 529.93 708.20 C554.70 708.20 567.09 708.20 591.86 708.20 C616.63 708.20 629.02 708.20 653.79 708.20 C678.56 708.20 690.95 708.20 715.72 708.20 C740.49 708.20 752.88 708.20 777.65 708.20 C802.42 708.20 839.58 708.20 839.58 708.20" fill="none" stroke="#4f65e0" stroke-width="1.5"/><path d="M468.0 707.7 L839.5799999999999 707.7" stroke="#4f65e0" stroke-width="1.5"/><circle cx="468.0" cy="647.9" r="4" fill="#4f65e0"/><circle cx="529.9" cy="708.2" r="3.6" fill="#4f65e0"/><circle cx="591.9" cy="708.2" r="3.6" fill="#4f65e0"/><circle cx="653.8" cy="708.2" r="3.6" fill="#4f65e0"/><circle cx="715.7" cy="708.2" r="3.6" fill="#4f65e0"/><circle cx="777.6" cy="708.2" r="3.6" fill="#4f65e0"/><circle cx="839.6" cy="708.2" r="3.6" fill="#4f65e0"/></svg>
<div class="lb" style="left:419.3px;top:744.5px;background:#1b2566"></div>
<div class="leg" style="left:438.3px;top:743.5px">Panoramic Elevator</div>
<div class="lb" style="left:541.5px;top:744.5px;background:#4f65e0"></div>
<div class="leg" style="left:560.5px;top:743.5px">Passenger Service Elevator</div>
<div class="lb" style="left:698.5px;top:744.5px;background:#7b8ae6"></div>
<div class="leg" style="left:717.5px;top:743.5px">Escalators</div>
<div class="lb" style="left:419.3px;top:756.5px;background:#94b4e3"></div>
<div class="leg" style="left:438.3px;top:755.5px">Hospital Bed Elevator</div>
<div class="lb" style="left:550px;top:756.5px;background:#9cc6f0"></div>
<div class="leg" style="left:569px;top:755.5px">Moving Walkway</div>
<div class="lb" style="left:661px;top:756.5px;background:#a9b3ef"></div>
<div class="leg" style="left:680px;top:755.5px">Platform Elevator</div>
<div class="lb" style="left:774px;top:756.5px;background:#b3d3f2"></div>
<div class="leg" style="left:793px;top:755.5px">Other</div>
<div class="lb" style="left:419.3px;top:768.5px;background:#dde7fa"></div>
<div class="leg" style="left:438.3px;top:767.5px">Special Design Elevator</div>
<div class="lb" style="left:559px;top:768.5px;background:#dce6f8"></div>
<div class="leg" style="left:578px;top:767.5px">Dumb Waiter</div>
<div class="lb" style="left:653px;top:768.5px;background:#1b2566"></div>
<div class="leg" style="left:672px;top:767.5px">Home Elevator</div>
<div class="lb" style="left:755px;top:768.5px;background:#4f65e0"></div>
<div class="leg" style="left:774px;top:767.5px">Suspended Elevator</div>
<svg class="abs" style="left:0;top:0;overflow:visible" width="1728" height="992"><rect x="944" y="444.5" width="424" height="1" fill="#e6e6e6"/><rect x="936.5" y="444.4" width="8" height="1.2" fill="#9a9a9a"/><rect x="944" y="479.5" width="424" height="1" fill="#e6e6e6"/><rect x="936.5" y="479.4" width="8" height="1.2" fill="#9a9a9a"/><rect x="944" y="514.2" width="424" height="1" fill="#e6e6e6"/><rect x="936.5" y="514.1" width="8" height="1.2" fill="#9a9a9a"/><rect x="944" y="548.5" width="424" height="1" fill="#e6e6e6"/><rect x="936.5" y="548.4" width="8" height="1.2" fill="#9a9a9a"/><rect x="944" y="582.7" width="424" height="1" fill="#e6e6e6"/><rect x="936.5" y="582.6" width="8" height="1.2" fill="#9a9a9a"/><rect x="944" y="617.4" width="424" height="1" fill="#e6e6e6"/><rect x="936.5" y="617.3" width="8" height="1.2" fill="#9a9a9a"/><rect x="944" y="652.0" width="424" height="1" fill="#e6e6e6"/><rect x="936.5" y="651.9" width="8" height="1.2" fill="#9a9a9a"/><rect x="944" y="686.3" width="424" height="1" fill="#e6e6e6"/><rect x="936.5" y="686.1999999999999" width="8" height="1.2" fill="#9a9a9a"/><rect x="943.5" y="445" width="1.2" height="242" fill="#9a9a9a"/><text x="931.5" y="466.5" text-anchor="end" font-family="Liberation Sans" font-size="11.5" fill="#666">2020</text><text x="931.5" y="501.4" text-anchor="end" font-family="Liberation Sans" font-size="11.5" fill="#666">2021</text><text x="931.5" y="535.9" text-anchor="end" font-family="Liberation Sans" font-size="11.5" fill="#666">2022</text><text x="931.5" y="570.1" text-anchor="end" font-family="Liberation Sans" font-size="11.5" fill="#666">2023</text><text x="931.5" y="604.5" text-anchor="end" font-family="Liberation Sans" font-size="11.5" fill="#666">2024</text><text x="931.5" y="639.2" text-anchor="end" font-family="Liberation Sans" font-size="11.5" fill="#666">2025</text><text x="931.5" y="673.6" text-anchor="end" font-family="Liberation Sans" font-size="11.5" fill="#666">2026</text><text transform="translate(947.0,701.5) rotate(-45)" text-anchor="end" font-family="Liberation Sans" font-size="10.5" fill="#666">0</text><text transform="translate(989.4,701.5) rotate(-45)" text-anchor="end" font-family="Liberation Sans" font-size="10.5" fill="#666">500k</text><text transform="translate(1031.8,701.5) rotate(-45)" text-anchor="end" font-family="Liberation Sans" font-size="10.5" fill="#666">1 000k</text><text transform="translate(1074.2,701.5) rotate(-45)" text-anchor="end" font-family="Liberation Sans" font-size="10.5" fill="#666">1 500k</text><text transform="translate(1116.6,701.5) rotate(-45)" text-anchor="end" font-family="Liberation Sans" font-size="10.5" fill="#666">2 000k</text><text transform="translate(1159.0,701.5) rotate(-45)" text-anchor="end" font-family="Liberation Sans" font-size="10.5" fill="#666">2 500k</text><text transform="translate(1201.4,701.5) rotate(-45)" text-anchor="end" font-family="Liberation Sans" font-size="10.5" fill="#666">3 000k</text><text transform="translate(1243.8,701.5) rotate(-45)" text-anchor="end" font-family="Liberation Sans" font-size="10.5" fill="#666">3 500k</text><text transform="translate(1286.2,701.5) rotate(-45)" text-anchor="end" font-family="Liberation Sans" font-size="10.5" fill="#666">4 000k</text><text transform="translate(1328.6,701.5) rotate(-45)" text-anchor="end" font-family="Liberation Sans" font-size="10.5" fill="#666">4 500k</text><text transform="translate(1371.0,701.5) rotate(-45)" text-anchor="end" font-family="Liberation Sans" font-size="10.5" fill="#666">5 000k</text><rect x="944.0" y="451.1" width="114.0" height="2" fill="#8f8f8f"/><rect x="944.0" y="453.3" width="96.0" height="2" fill="#c9d3f4"/><rect x="1041.8" y="453.5" width="242.2" height="2" fill="#2a44d8"/><rect x="944.0" y="455.9" width="96.0" height="1.5" fill="#cad6f3"/><rect x="944.0" y="458.2" width="170.0" height="1.5" fill="#d5e2f7"/><rect x="1114.8" y="457.0" width="26.2" height="2" fill="#8fb2e6"/><rect x="952.8" y="460.4" width="375.7" height="2" fill="#a3aef0"/><rect x="944.0" y="460.9" width="8.0" height="1" fill="#e0d8f0"/><rect x="944.0" y="462.6" width="8.0" height="2" fill="#9cc6f0"/><rect x="944.0" y="466.0" width="120.0" height="2" fill="#dfe9fa"/><rect x="944.0" y="469.5" width="56.8" height="2" fill="#2040d8"/><rect x="944.0" y="489.5" width="135.8" height="2" fill="#3a52dc"/><rect x="944.0" y="528.1" width="162.0" height="2" fill="#9cc3ef"/><rect x="944.0" y="590.0" width="384.5" height="2" fill="#1b2566"/></svg>
<div class="lb" style="left:962.5px;top:744.5px;background:#1b2566"></div>
<div class="leg" style="left:981.5px;top:743.5px">Public Facilities</div>
<div class="lb" style="left:1068px;top:744.5px;background:#4f65e0"></div>
<div class="leg" style="left:1087px;top:743.5px">Building Complex</div>
<div class="lb" style="left:1181.5px;top:744.5px;background:#7b8ae6"></div>
<div class="leg" style="left:1200.5px;top:743.5px">Hospital</div>
<div class="lb" style="left:1255.5px;top:744.5px;background:#94b4e3"></div>
<div class="leg" style="left:1274.5px;top:743.5px">School</div>
<div class="lb" style="left:962.5px;top:756.5px;background:#9cc6f0"></div>
<div class="leg" style="left:981.5px;top:755.5px">Office Building</div>
<div class="lb" style="left:1063px;top:756.5px;background:#a9b3ef"></div>
<div class="leg" style="left:1082px;top:755.5px">Public Transportation</div>
<div class="lb" style="left:1194px;top:756.5px;background:#b3d3f2"></div>
<div class="leg" style="left:1213px;top:755.5px">Others</div>
<div class="lb" style="left:1260.5px;top:756.5px;background:#dde7fa"></div>
<div class="leg" style="left:1279.5px;top:755.5px">Factory</div>
<div class="lb" style="left:962.5px;top:768.5px;background:#dce6f8"></div>
<div class="leg" style="left:981.5px;top:767.5px">Shopping Mall</div>
<div class="lb" style="left:1062px;top:768.5px;background:#1b2566"></div>
<div class="leg" style="left:1081px;top:767.5px">Residence</div>
<div class="lb" style="left:1145px;top:768.5px;background:#4f65e0"></div>
<div class="leg" style="left:1164px;top:767.5px">Hotel</div>
<div class="lb" style="left:1205.5px;top:768.5px;background:#7b8ae6"></div>
<div class="leg" style="left:1224.5px;top:767.5px">Government</div>
</body></html>
